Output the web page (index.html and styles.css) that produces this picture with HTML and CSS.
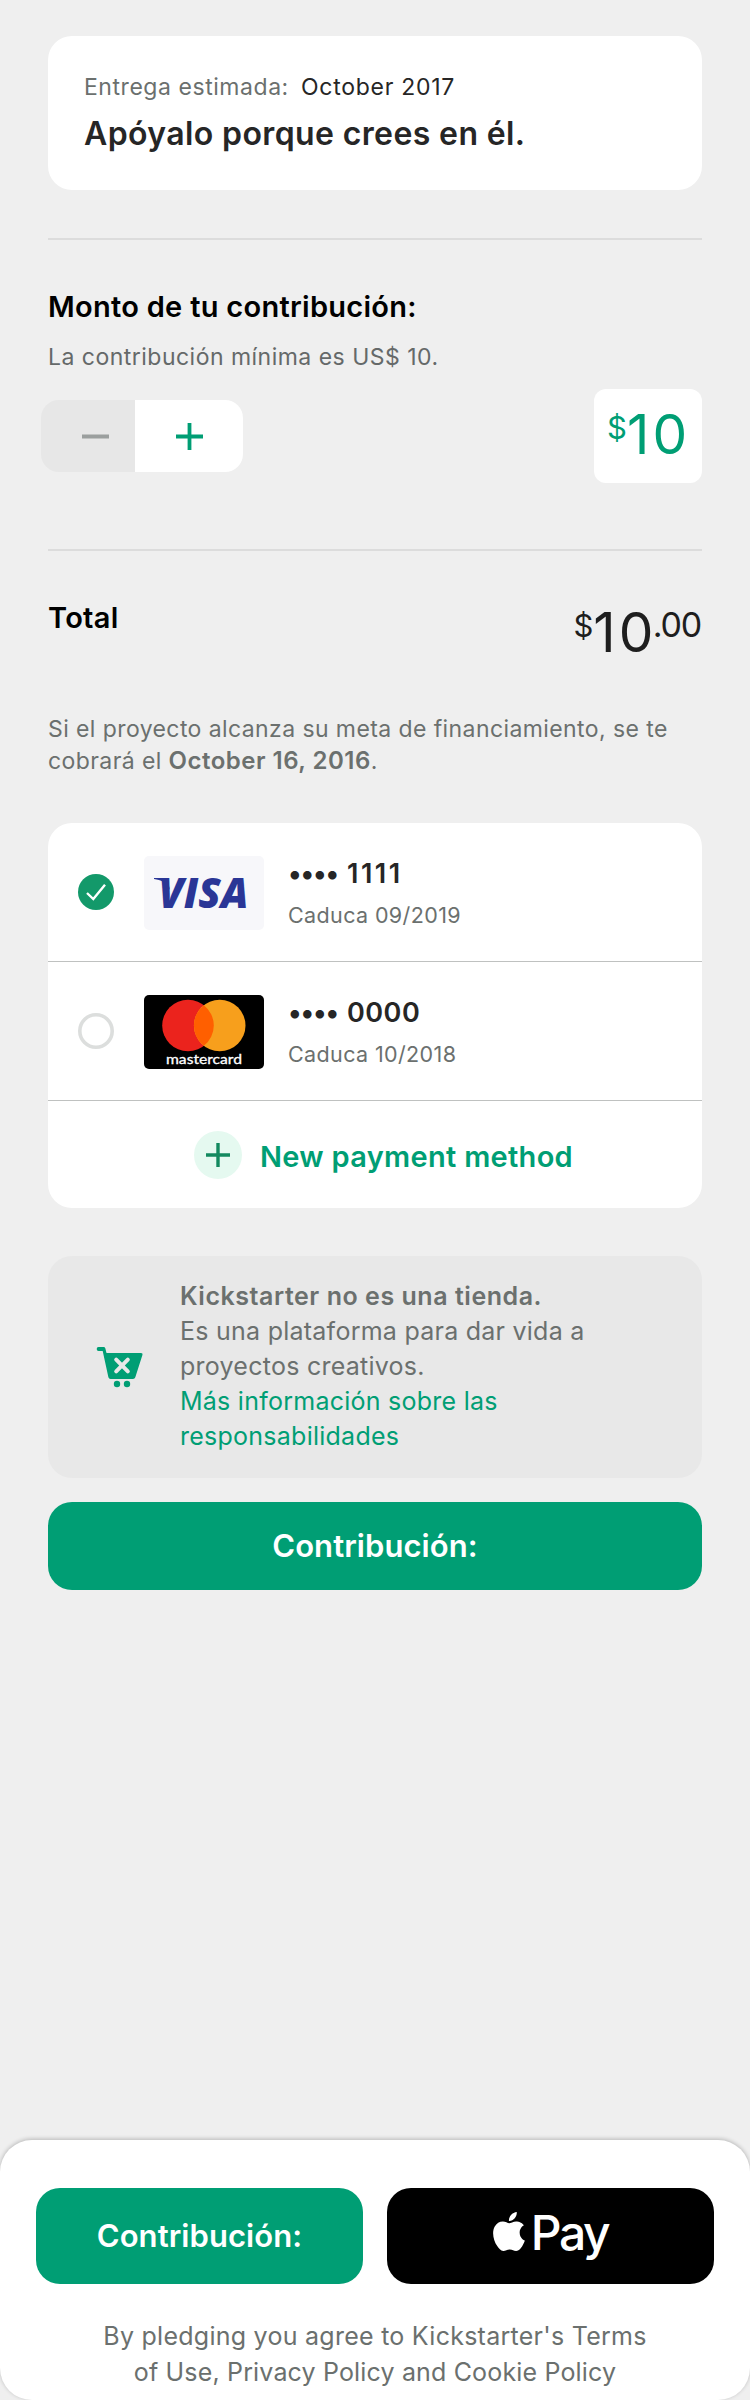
FILE: index.html
```html
<!DOCTYPE html>
<html lang="es">
<head>
<meta charset="utf-8">
<title>Contribución</title>
<link rel="stylesheet" href="styles.css">
</head>
<body>
<div class="page">
  <main class="content">
    <section class="reward">
      <div class="reward-date"><span class="muted">Entrega estimada:</span><span class="date">October 2017</span></div>
      <h1 class="reward-title">Apóyalo porque crees en él.</h1>
    </section>

    <section class="pledge">
      <h2 class="heading">Monto de tu contribución:</h2>
      <p class="minimum">La contribución mínima es US$ 10.</p>
      <div class="pledge-row">
        <div class="stepper">
          <button class="step step-minus" aria-label="Menos">
            <svg width="27" height="27" viewBox="0 0 27 27"><path d="M0 13.5h27" stroke="#9b9f9e" stroke-width="4"/></svg>
          </button>
          <button class="step step-plus" aria-label="Más">
            <svg width="27" height="27" viewBox="0 0 27 27"><path d="M0 13.5h27M13.5 0v27" stroke="#009e74" stroke-width="3.800"/></svg>
          </button>
        </div>
        <div class="amount"><span class="sup">$</span><span class="big">10</span></div>
      </div>
    </section>

    <section class="total">
      <h2 class="heading total-label">Total</h2>
      <div class="total-value"><span class="sup">$</span><span class="big">10</span><span class="cents">.00</span></div>
    </section>

    <p class="notice">Si el proyecto alcanza su meta de financiamiento, se te<br>cobrará el <b>October 16, 2016</b>.</p>

    <section class="cards">
      <div class="card-row">
        <svg class="radio" width="36" height="36" viewBox="0 0 36 36"><circle cx="18" cy="18" r="18" fill="#13996a"/><path d="M9 19l6.300 6L27 10.800" fill="none" stroke="#fff" stroke-width="2.400"/></svg>
        <svg class="brand" width="120" height="74" viewBox="0 0 120 74">
          <rect width="120" height="74" rx="5" fill="#f7f7fa"/>
          <path d="M10 22h13l3 12C22 26 17 24 10 23z" fill="#2a3696"/>
          <text class="visa" x="14.500" y="52" textLength="90" lengthAdjust="spacingAndGlyphs">VISA</text>
        </svg>
        <div class="card-text">
          <div class="card-number"><span class="dots">••••</span><span class="ones">1111</span></div>
          <div class="card-expiry">Caduca 09/2019</div>
        </div>
      </div>
      <div class="card-row">
        <svg class="radio" width="36" height="36" viewBox="0 0 36 36"><circle cx="18" cy="18" r="16.200" fill="#fff" stroke="#dcdedd" stroke-width="3.600"/></svg>
        <svg class="brand" width="120" height="74" viewBox="0 0 120 74">
          <rect width="120" height="74" rx="5" fill="#000"/>
          <circle cx="44" cy="30.500" r="25.800" fill="#eb231d"/>
          <circle cx="75.700" cy="30.500" r="25.800" fill="#f79f1c"/>
          <path d="M59.850 10.150a25.800 25.800 0 0 1 0 40.700a25.800 25.800 0 0 1 0-40.700z" fill="#ff5f00"/>
          <text class="mastercard" x="22" y="69" textLength="76" lengthAdjust="spacingAndGlyphs">mastercard</text>
        </svg>
        <div class="card-text">
          <div class="card-number"><span class="dots">••••</span><span>0000</span></div>
          <div class="card-expiry">Caduca 10/2018</div>
        </div>
      </div>
      <div class="card-add">
        <svg width="48" height="48" viewBox="0 0 48 48"><circle cx="24" cy="24" r="24" fill="#e5f9f0"/><path d="M12 24h24M24 12v24" stroke="#13895f" stroke-width="3.400"/></svg>
        <span class="card-add-label">New payment method</span>
      </div>
    </section>

    <section class="info">
      <svg class="cart" width="48" height="42" viewBox="0 0 48 42">
        <path d="M2.500 1h5.200q1.200 0 1.600 1.300l1.200 4.700H45q2 0 1.500 1.800l-7.200 22.400q-.6 1.800-2.300 1.800H14.500q-1.700 0-2.100-1.700L6.700 5H2.500Q.7 5 .7 3T2.500 1z" fill="#009e74"/>
        <circle cx="21" cy="38" r="3.200" fill="#009e74"/><circle cx="31" cy="38" r="3.200" fill="#009e74"/>
        <path d="M20.200 13.700l11.600 11.600M31.800 13.700L20.200 25.300" stroke="#e8e8e8" stroke-width="4" stroke-linecap="round"/>
      </svg>
      <div class="info-text">
        <b>Kickstarter no es una tienda.</b><br>Es una plataforma para dar vida a<br>proyectos creativos.<br>
        <a class="link">Más información sobre las<br>responsabilidades</a>
      </div>
    </section>

    <button class="btn btn-wide">Contribución:</button>
  </main>

  <footer class="footer">
    <div class="footer-buttons">
      <button class="btn">Contribución:</button>
      <button class="btn btn-apple">
        <svg class="apple" width="32" height="39" viewBox="2.200 0 19.600 24"><path fill="#fff" d="M12.152 6.896c-.948 0-2.415-1.078-3.960-1.040-2.040.027-3.910 1.183-4.961 3.014-2.117 3.675-.546 9.103 1.519 12.090 1.013 1.454 2.208 3.090 3.792 3.039 1.520-.065 2.090-.987 3.935-.987 1.831 0 2.350.987 3.960.948 1.637-.026 2.676-1.480 3.676-2.948 1.156-1.688 1.636-3.325 1.662-3.415-.039-.013-3.182-1.221-3.220-4.857-.026-3.040 2.480-4.494 2.597-4.559-1.429-2.090-3.623-2.324-4.390-2.376-2-.156-3.675 1.090-4.610 1.090zM15.530 3.830c.843-1.012 1.400-2.427 1.245-3.830-1.207.052-2.662.805-3.532 1.818-.780.896-1.454 2.338-1.273 3.714 1.338.104 2.715-.688 3.559-1.701z"/></svg>
        <span class="pay">Pay</span>
      </button>
    </div>
    <p class="legal"><span class="legal-first">By pledging you agree to Kickstarter's Terms</span><br>of Use, Privacy Policy and Cookie Policy</p>
  </footer>
</div>
</body>
</html>
```

FILE: styles.css
```css
* { box-sizing: border-box; }

body {
  margin: 0;
  background: #efefef;
  font-family: Inter, "Liberation Sans", sans-serif;
  color: #262626;
}

h1, h2, p { margin: 0; }

button { border: 0; padding: 0; font-family: inherit; }

.page {
  width: 750px;
  height: 2400px;
  display: flex;
  flex-direction: column;
  justify-content: space-between;
}

.content { padding: 36px 48px 0; }

.reward {
  height: 154px;
  padding: 35px 35px 0 36px;
  border-radius: 24px;
  background: #fff;
}

.reward-date {
  display: flex;
  font-size: 23px;
  line-height: 32px;
  letter-spacing: 0.55px;
}

.muted { width: 217px; color: #6b706e; }
.date { letter-spacing: 0.72px; }

.reward-title {
  margin-top: 11px;
  font-size: 32px;
  line-height: 40px;
  font-weight: 600;
  letter-spacing: 0.38px;
}

.pledge {
  margin-top: 48px;
  padding-top: 49px;
  height: 311px;
  border-top: 2px solid #dcdcdc;
}

.heading {
  color: #000;
  font-size: 29px;
  line-height: 36px;
  font-weight: 600;
  letter-spacing: 0.28px;
}

.minimum {
  margin-top: 16px;
  font-size: 23px;
  line-height: 32px;
  letter-spacing: 0.48px;
  color: #656969;
}

.pledge-row {
  display: flex;
  align-items: center;
  justify-content: space-between;
  margin-top: 16px;
  margin-left: -7px;
}

.stepper {
  display: flex;
  width: 202px;
  height: 72px;
  border-radius: 18px;
  overflow: hidden;
}

.step { display: flex; align-items: center; justify-content: center; }
.step-minus { width: 94px; padding-left: 14px; background: #e7e7e7; }
.step-plus { width: 108px; background: #fff; }

.amount {
  width: 108px;
  height: 94px;
  padding: 15px 0 0 13px;
  border-radius: 12px;
  background: #fff;
  color: #009e74;
  line-height: 60px;
  white-space: nowrap;
}

.sup { font-size: 31px; line-height: 0; vertical-align: 15px; }
.big { font-size: 55px; letter-spacing: 3.2px; }
.cents { margin-left: -4px; font-size: 34px; line-height: 0; letter-spacing: -1.2px; vertical-align: 15px; }

.total {
  display: flex;
  justify-content: space-between;
  height: 164px;
  padding-top: 49px;
  border-top: 2px solid #dcdcdc;
}

.total-value { padding: 2px 1px 0 0; line-height: 60px; color: #1e1e1e; white-space: nowrap; }

.notice {
  font-size: 23px;
  line-height: 32px;
  letter-spacing: 0.41px;
  color: #6b706e;
}

.notice b { font-size: 24px; font-weight: 600; line-height: 0; letter-spacing: 0.5px; }

.cards {
  margin-top: 46px;
  border-radius: 24px;
  background: #fff;
}

.card-row {
  display: flex;
  align-items: center;
  height: 139px;
  padding: 2px 0 0 30px;
  border-bottom: 1px solid #bfc1c0;
}

.radio { margin: -2px 30px 0 0; }
.brand { margin-right: 24px; }

.visa {
  font: italic 800 42px "Open Sans", sans-serif;
  fill: #2a3696;
}

.mastercard {
  font: 400 14px Lato, sans-serif;
  fill: #fff;
  stroke: #fff;
  stroke-width: 0.3px;
}

.card-number {
  display: flex;
  font-size: 27px;
  line-height: 34px;
  font-weight: 600;
  letter-spacing: 0.5px;
}

.dots { width: 59px; letter-spacing: -1.1px; }
.ones { letter-spacing: 2.5px; }

.card-expiry {
  margin-top: 10px;
  font-size: 21.5px;
  line-height: 28px;
  letter-spacing: 0.38px;
  color: #6b706e;
}

.card-add {
  display: flex;
  align-items: center;
  gap: 18px;
  height: 107px;
  padding-left: 146px;
}

.card-add-label {
  padding-top: 4px;
  font-size: 29px;
  line-height: 36px;
  font-weight: 600;
  letter-spacing: 0.3px;
  color: #009e74;
}

.info {
  display: flex;
  gap: 36px;
  height: 222px;
  margin-top: 48px;
  padding: 23px 0 0 48px;
  border-radius: 24px;
  background: #e8e8e8;
}

.cart { margin-top: 67px; }

.info-text {
  font-size: 25px;
  line-height: 35px;
  letter-spacing: 0.25px;
  color: #6b706e;
}

.info-text b { font-weight: 600; letter-spacing: 0.54px; }
.link { color: #009e74; }

.btn {
  display: flex;
  align-items: center;
  justify-content: center;
  width: 327px;
  height: 96px;
  border-radius: 24px;
  background: #009e74;
  color: #fff;
  font-size: 31px;
  line-height: 40px;
  font-weight: 600;
  letter-spacing: 0.07px;
}

.btn-wide { width: 654px; height: 88px; margin-top: 24px; }
.btn-apple { gap: 6px; background: #000; }
.apple { margin-top: -9px; }

.pay {
  padding-bottom: 6px;
  font-size: 48px;
  font-weight: 500;
  letter-spacing: -2.4px;
}

.footer {
  height: 260px;
  padding: 48px 36px 0;
  border-radius: 32px;
  background: #fff;
  box-shadow: 0 -1px 4px rgba(0, 0, 0, 0.24);
}

.footer-buttons { display: flex; gap: 24px; }

.legal {
  margin-top: 34px;
  font-size: 25px;
  line-height: 36px;
  letter-spacing: 0.16px;
  text-align: center;
  color: #6b706e;
}

.legal-first { letter-spacing: 0.26px; }
```
